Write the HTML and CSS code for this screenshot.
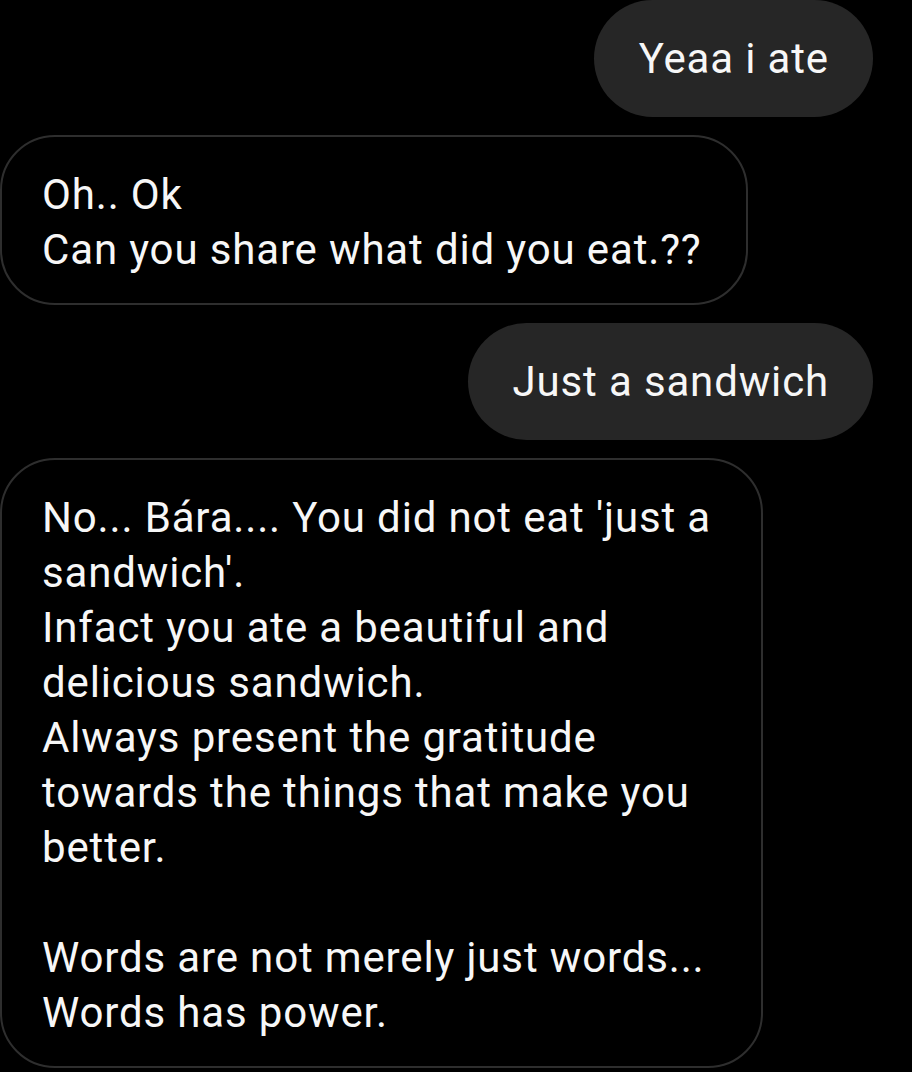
FILE: index.html
```html
<!DOCTYPE html>
<html lang="en">
<head>
    <meta charset="UTF-8">
    <meta name="viewport" content="width=device-width, initial-scale=1.0">
    <title>Chat</title>
    <link rel="stylesheet" href="styles.css">
</head>
<body>

    <div class="chat">
        <div class="bubble sent">Yeaa i ate</div>

        <div class="bubble received">
            Oh.. Ok<br>
            Can you share what did you eat.??
        </div>

        <div class="bubble sent">Just a sandwich</div>

        <div class="bubble received">
            No... Bára.... You did not eat 'just a sandwich'.<br>
            Infact you ate a beautiful and delicious sandwich.<br>
            Always present the gratitude towards the things that make you better.<br>
            <br>
            Words are not merely just words...<br>
            Words has power.
        </div>
    </div>

</body>
</html>
```

FILE: styles.css
```css
body { margin: 0; background: #000; font-family: Roboto, "Liberation Sans", sans-serif; color: #f7f7f7; }
.chat { display: flex; flex-direction: column; gap: 18px; padding: 0 39px 0 0; }
.bubble { font-size: 42px; line-height: 55px; letter-spacing: 0.85px; max-width: 763px; box-sizing: border-box; }
.sent { align-self: flex-end; background: #262626; border-radius: 60px; padding: 31px 44px 31px 45px; }
.received { align-self: flex-start; border: 2px solid #2e2e2e; border-radius: 55px; padding: 30px 44px 26px 40px; }
```
